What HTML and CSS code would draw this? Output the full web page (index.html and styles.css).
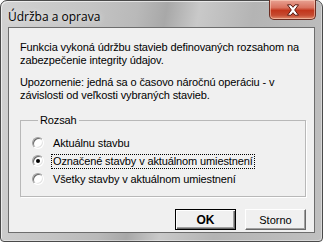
FILE: index.html
```html
<!DOCTYPE html>
<html lang="sk">
<head>
    <meta charset="UTF-8">
    <title>Údržba a oprava</title>
    <link rel="stylesheet" href="styles.css">
</head>
<body>

    <div class="window">
        <div class="titlebar">
            <span class="title">Údržba a oprava</span>
            <button class="close" type="button" aria-label="Zavrieť">
                <svg width="16" height="12" viewBox="0 0 16 12">
                    <path d="M2.5 0.8 L6 0.8 L8 3.3 L10 0.8 L13.5 0.8 L9.7 6 L13.5 11.2 L10 11.2 L8 8.7 L6 11.2 L2.5 11.2 L6.3 6 Z" fill="#fff" stroke="#5a1a10" stroke-width="1" stroke-linejoin="round"/>
                </svg>
            </button>
        </div>

        <div class="client">
            <p class="note">Funkcia vykoná údržbu stavieb definovaných rozsahom na<br>zabezpečenie integrity údajov.</p>
            <p class="note">Upozornenie: jedná sa o časovo náročnú operáciu - v<br>závislosti od veľkosti vybraných stavieb.</p>

            <fieldset class="group">
                <legend>Rozsah</legend>
                <label class="option"><span class="radio"></span><span class="text">Aktuálnu stavbu</span></label>
                <label class="option"><span class="radio checked"></span><span class="text focused">Označené stavby v aktuálnom umiestnení</span></label>
                <label class="option"><span class="radio"></span><span class="text">Všetky stavby v aktuálnom umiestnení</span></label>
            </fieldset>

            <div class="actions">
                <button class="btn default" type="button">OK</button>
                <button class="btn" type="button">Storno</button>
            </div>
        </div>
    </div>

</body>
</html>
```

FILE: styles.css
```css
body {
    margin: 0;
    background: #fff;
    font-family: "Liberation Sans", Arial, sans-serif;
}
.window {
    box-sizing: border-box;
    width: 323px;
    height: 242px;
    padding: 0 7px 8px 7px;
    display: flex;
    flex-direction: column;
    border: 1px solid #4a4a4a;
    border-radius: 7px 7px 4px 4px;
    background: linear-gradient(100deg, #d2d2d2 0%, #c4c4c4 25%, #b9b9b9 38%, #a8a8a8 46%, #c9c9c9 55%, #b4b4b4 70%, #c0c0c0 100%);
    box-shadow: inset 1px 1px 0 rgba(255, 255, 255, 0.6), inset -1px -1px 0 rgba(255, 255, 255, 0.4);
}
.titlebar {
    height: 28px;
    display: flex;
    align-items: flex-start;
    justify-content: space-between;
}
.title {
    margin-top: 7px;
    font-family: "Open Sans", sans-serif;
    font-size: 12px;
    color: #000;
    text-shadow: 0 0 6px rgba(255, 255, 255, 0.8);
}
.close {
    width: 47px;
    height: 20px;
    margin: -1px -1px 0 0;
    padding: 0;
    display: flex;
    align-items: center;
    justify-content: center;
    border: 1px solid #6b2d22;
    border-top: none;
    border-radius: 0 0 5px 5px;
    background: linear-gradient(#e8a293 0%, #d9735f 40%, #c2361c 55%, #c54a30 80%, #e08a6c 100%);
    box-shadow: inset 0 0 0 1px rgba(255, 220, 200, 0.5);
}
.client {
    flex: 1;
    padding: 13px 8px 2px 11px;
    border: 1px solid #6d6d6d;
    background: #f0f0f0;
    font-size: 11px;
    line-height: 13px;
    letter-spacing: -0.12px;
    color: #000;
}
.note {
    margin: 0 0 9px 0;
}
.group {
    margin: 12px 0 0 0;
    padding: 7px 0 8px 11px;
    border: 1px solid #b8b8b8;
    border-radius: 0;
    box-shadow: 1px 1px 0 #fff;
}
.group legend {
    margin-left: 6px;
    padding: 0 2px;
}
.option {
    height: 18px;
    display: flex;
    align-items: center;
}
.radio {
    box-sizing: border-box;
    width: 12px;
    height: 12px;
    margin-right: 7px;
    position: relative;
    border-radius: 50%;
    border: 1px solid;
    border-color: #a0a0a0 #fff #fff #a0a0a0;
    background: #fff;
    box-shadow: inset 1px 1px 0 #696969, inset -1px -1px 0 #e3e3e3;
}
.radio.checked::after {
    content: "";
    position: absolute;
    left: 3px;
    top: 3px;
    width: 4px;
    height: 4px;
    border-radius: 50%;
    background: #000;
}
.text {
    padding: 0 1px;
    border: 1px solid transparent;
}
.text.focused {
    border: 1px dotted #000;
}
.actions {
    margin-top: 12px;
    display: flex;
    justify-content: flex-end;
    gap: 9px;
}
.btn {
    width: 61px;
    height: 21px;
    padding: 0;
    font-family: "Liberation Sans", Arial, sans-serif;
    font-size: 11px;
    color: #000;
    background: #f0f0f0;
    border: 1px solid;
    border-color: #fff #696969 #696969 #fff;
    box-shadow: inset -1px -1px 0 #a0a0a0;
}
.btn.default {
    font-weight: bold;
    font-size: 12px;
    border: 1px solid #000;
    box-shadow: inset 1px 1px 0 #fff, inset -1px -1px 0 #696969, inset -2px -2px 0 #a0a0a0;
}
```
